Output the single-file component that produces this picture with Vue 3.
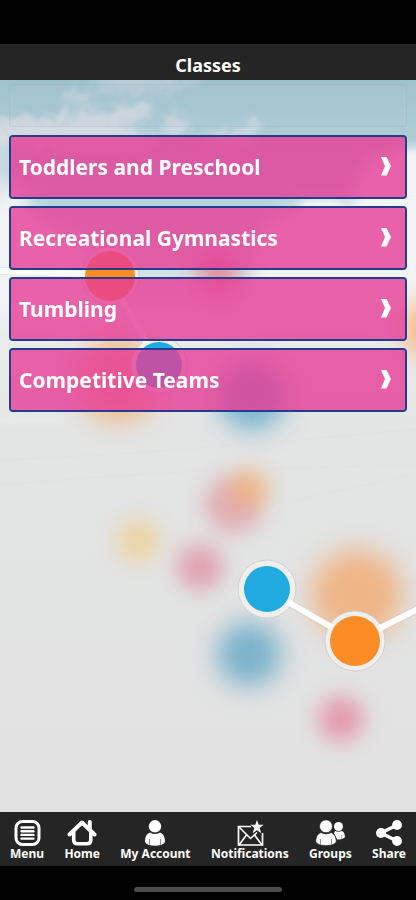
<script setup>
const classes = [
  'Toddlers and Preschool',
  'Recreational Gymnastics',
  'Tumbling',
  'Competitive Teams',
]

const tabs = [
  { id: 'menu', label: 'Menu' },
  { id: 'home', label: 'Home' },
  { id: 'account', label: 'My Account' },
  { id: 'notifications', label: 'Notifications' },
  { id: 'groups', label: 'Groups' },
  { id: 'share', label: 'Share' },
]
</script>

<template>
  <div class="app">
    <div class="status"></div>
    <header class="header"><h1 class="title">Classes</h1></header>

    <main class="main">
      <svg class="scene" viewBox="0 80 416 732" preserveAspectRatio="xMidYMin slice" aria-hidden="true">
        <defs>
          <linearGradient id="sky" x1="0" y1="80" x2="0" y2="812" gradientUnits="userSpaceOnUse">
            <stop offset="0" stop-color="#9fc3cc" />
            <stop offset="0.07" stop-color="#abccd4" />
            <stop offset="0.17" stop-color="#b8d5dd" />
            <stop offset="0.27" stop-color="#d6e3e8" />
            <stop offset="0.34" stop-color="#ececed" />
            <stop offset="0.48" stop-color="#e3e4e4" />
            <stop offset="1" stop-color="#e2e2e2" />
          </linearGradient>
          <filter id="b2" x="-50%" y="-50%" width="200%" height="200%"><feGaussianBlur stdDeviation="3" /></filter>
          <filter id="b6" x="-50%" y="-50%" width="200%" height="200%"><feGaussianBlur stdDeviation="8" /></filter>
          <filter id="b9" x="-50%" y="-50%" width="200%" height="200%" color-interpolation-filters="sRGB"><feGaussianBlur stdDeviation="10" /></filter>
          <filter id="b12" x="-60%" y="-60%" width="220%" height="220%" color-interpolation-filters="sRGB"><feGaussianBlur stdDeviation="13" /></filter>
          <filter id="cloud" x="-20%" y="-50%" width="140%" height="200%" color-interpolation-filters="sRGB">
            <feGaussianBlur in="SourceGraphic" stdDeviation="5" result="soft" />
            <feTurbulence type="fractalNoise" baseFrequency="0.07" numOctaves="3" seed="4" result="n" />
            <feDisplacementMap in="soft" in2="n" scale="24" xChannelSelector="R" yChannelSelector="G" />
            <feGaussianBlur stdDeviation="1" />
          </filter>
        </defs>
        <rect x="0" y="80" width="416" height="732" fill="url(#sky)" />

        <g filter="url(#cloud)" fill="#d3dae1">
          <ellipse cx="145" cy="84" rx="50" ry="9" opacity="0.5" />
          <ellipse cx="80" cy="99" rx="16" ry="8" opacity="0.65" />
          <ellipse cx="132" cy="114" rx="16" ry="10" />
          <ellipse cx="100" cy="121" rx="32" ry="10" />
          <ellipse cx="62" cy="128" rx="26" ry="12" />
          <ellipse cx="30" cy="125" rx="16" ry="10" />
          <ellipse cx="0" cy="130" rx="22" ry="10" />
          <ellipse cx="80" cy="140" rx="80" ry="12" />
          <ellipse cx="176" cy="126" rx="14" ry="12" opacity="0.85" />
          <ellipse cx="252" cy="128" rx="9" ry="10" opacity="0.7" />
          <ellipse cx="230" cy="138" rx="28" ry="8" opacity="0.7" />
        </g>
        <g filter="url(#b6)" fill="#f2f3f4">
          <path d="M-20 176 L22 186 L34 215 L75 235 L120 285 L120 320 L-20 320Z" />
          <path d="M250 285 L262 225 L310 202 L350 205 L366 160 L400 150 L440 150 L440 320 L250 320Z" />
        </g>
        <path d="M-20 130 H14 L6 200 H-20Z" fill="#d9e0e4" opacity="0.7" filter="url(#b6)" />
        <g filter="url(#b2)" fill="#f3f4f5">
          <ellipse cx="322" cy="206" rx="24" ry="6" />
          <path d="M358 212 L366 180 L400 152 L430 150 V230 H358Z" />
          <ellipse cx="28" cy="420" rx="42" ry="3" opacity="0.4" />
        </g>
        <g fill="none" stroke="#d9dcdd" stroke-width="1" opacity="0.2">
          <path d="M0 460 Q170 453 416 429" />
          <path d="M0 485 Q205 466 416 466" />
          <path d="M250 510 Q320 495 416 474" />
        </g>

        <g filter="url(#b12)">
          <circle cx="118" cy="379" r="42" fill="#f6ac70" opacity="0.8" />
          <circle cx="252" cy="395" r="34" fill="#5fa8c8" opacity="0.85" />
          <circle cx="218" cy="272" r="20" fill="#ee5968" opacity="0.75" />
          <circle cx="430" cy="328" r="28" fill="#ffa45b" opacity="0.75" />
          <circle cx="357" cy="595" r="45" fill="#f2ab72" opacity="0.82" />
          <circle cx="249" cy="654" r="32" fill="#67a9c7" opacity="0.85" />
        </g>
        <g filter="url(#b9)">
          <circle cx="234" cy="504" r="29" fill="#e08c98" opacity="0.62" />
          <circle cx="250" cy="488" r="20" fill="#f2b26e" opacity="0.62" />
          <circle cx="138" cy="541" r="22" fill="#f1ce88" opacity="0.65" />
          <circle cx="200" cy="567" r="23" fill="#dd8298" opacity="0.66" />
          <circle cx="341" cy="719" r="23" fill="#e47c96" opacity="0.68" />
        </g>

        <g stroke="#c9c9c9" stroke-width="8" opacity="0.35">
          <path d="M0 271 L90 274" />
          <path d="M289 603 L332 628" />
          <path d="M379 628 L420 608" />
        </g>
        <g fill="#f0efee" stroke="#d1cfce" stroke-width="1">
          <circle cx="110" cy="276" r="29" />
          <circle cx="159" cy="365" r="28" />
          <circle cx="267" cy="589" r="29" />
          <circle cx="355" cy="641" r="30" />
        </g>
        <g stroke="#fff" stroke-width="6">
          <path d="M0 271 L86 274" />
          <path d="M122 299 L147 343" />
          <path d="M288 602 L333 628" />
          <path d="M378 629 L420 608" />
        </g>
        <circle cx="110" cy="276" r="25" fill="#fb8c26" />
        <circle cx="159" cy="365" r="23" fill="#20abe1" />
        <circle cx="267" cy="589" r="23" fill="#20abe1" />
        <circle cx="355" cy="641" r="25" fill="#fb8c26" />
      </svg>

      <div class="content">
        <div class="panel"></div>
        <nav class="list" aria-label="Classes">
          <a v-for="name in classes" :key="name" class="item" href="#">
            <span>{{ name }}</span>
            <svg class="chevron" viewBox="0 0 10 20" aria-hidden="true">
              <path d="M0 0H5.500L10 9L5.500 18.500H0L4 9Z" fill="#fff" />
            </svg>
          </a>
        </nav>
      </div>
    </main>

    <nav class="tabs" aria-label="Main">
      <a v-for="tab in tabs" :key="tab.id" class="tab" href="#">
        <svg v-if="tab.id === 'menu'" class="icon" viewBox="0 0 30 26" aria-hidden="true">
          <rect x="4" y="1.500" width="23" height="23" rx="6.500" fill="none" stroke="#fff" stroke-width="3" />
          <path d="M9.500 7.500H21.500M9.500 11.200H21.500M9.500 14.900H21.500M9.500 18.600H21.500" stroke="#fff" stroke-width="2.400" stroke-linecap="round" />
        </svg>
        <svg v-else-if="tab.id === 'home'" class="icon" viewBox="0 0 30 26" aria-hidden="true">
          <path d="M2.500 14.500L15 2.500L27.500 14.500" fill="none" stroke="#fff" stroke-width="4" stroke-linecap="round" stroke-linejoin="round" />
          <path d="M22.800 2V9" stroke="#fff" stroke-width="4" stroke-linecap="round" />
          <path d="M6.700 12V20Q6.700 23.800 10.500 23.800H20Q23.800 23.800 23.800 20V12" fill="none" stroke="#fff" stroke-width="3.600" />
        </svg>
        <svg v-else-if="tab.id === 'account'" class="icon" viewBox="0 0 30 26" aria-hidden="true">
          <circle cx="15" cy="6.300" r="6.200" fill="#fff" />
          <path d="M10 12.500Q15 15.500 20 12.500C24 14 25 18 25 22Q24 24 21 25Q15 26.500 9 25Q6 24 5 22C5 18 6 14 10 12.500Z" fill="#fff" />
          <path d="M9.500 19V25M20.500 19V25" stroke="#777" stroke-width="0.800" />
        </svg>
        <svg v-else-if="tab.id === 'notifications'" class="icon" viewBox="0 0 30 26" aria-hidden="true">
          <path d="M16 6.500H3.500V25H27.500V13" fill="none" stroke="#fff" stroke-width="1.700" />
          <path d="M4 7L15.500 18.500L22 12.500M4 25L11.500 15M27 25L19.500 15" fill="none" stroke="#fff" stroke-width="1.600" />
          <path d="M22 0L23.700 4.800H28.500L24.700 8L26.300 13.200L22 10.200L17.700 13.200L19.300 8L15.500 4.800H20.300Z" fill="#fff" />
        </svg>
        <svg v-else-if="tab.id === 'groups'" class="icon" viewBox="0 0 30 26" aria-hidden="true">
          <circle cx="23.500" cy="6.500" r="4.500" fill="#fff" />
          <path d="M20 11Q23.500 12.500 27 11C29.500 12 30 15 29.800 17.500Q27 20 22 19.500L19 13Z" fill="#fff" />
          <path d="M26.700 15V19" stroke="#777" stroke-width="0.700" />
          <circle cx="11" cy="6.300" r="6.500" fill="#fff" stroke="#252525" stroke-width="0.800" />
          <path d="M6 12.500Q11 15.500 16 12.500C20 14 21.300 18 21.300 22Q20 24 17 25Q11 26.500 5 25Q2 24 0.700 22C0.700 18 2 14 6 12.500Z" fill="#fff" stroke="#252525" stroke-width="0.800" />
          <path d="M5.500 19V25M16.500 19V25" stroke="#777" stroke-width="0.800" />
        </svg>
        <svg v-else class="icon" viewBox="0 0 30 26" aria-hidden="true">
          <path d="M23 5L7 13L23 21" fill="none" stroke="#fff" stroke-width="3.600" />
          <circle cx="23" cy="5" r="4.900" fill="#fff" />
          <circle cx="7" cy="13" r="5" fill="#fff" />
          <circle cx="23" cy="21" r="4.900" fill="#fff" />
        </svg>
        <span>{{ tab.label }}</span>
      </a>
    </nav>
    <div class="gesture"><div class="bar"></div></div>
  </div>
</template>

<style>
body {
  background: #000;
}
</style>

<style scoped>
.app {
  display: flex;
  flex-direction: column;
  min-height: 100vh;
  background: #000;
  color: #fff;
  font-family: "Noto Sans", "Open Sans", sans-serif;
  font-weight: 700;
}
.status {
  height: 44px;
}
.header {
  display: flex;
  align-items: center;
  justify-content: center;
  height: 36px;
  padding-top: 6px;
  box-sizing: border-box;
  background: #252525;
}
.title {
  margin: 0;
  font-size: 18px;
  line-height: 28px;
}
.main {
  position: relative;
  flex: 1;
  overflow: hidden;
  background: #e2e2e2;
}
.scene {
  position: absolute;
  inset: 0;
  width: 100%;
  height: 100%;
}
.content {
  position: relative;
  padding: 4px 9px;
}
.panel {
  height: 43px;
  margin-bottom: 8px;
  box-sizing: border-box;
  border: 1px solid rgba(130, 160, 180, 0.16);
  border-radius: 3px;
  background: rgba(175, 190, 210, 0.14);
}
.list {
  display: flex;
  flex-direction: column;
  gap: 7px;
}
.item {
  display: flex;
  align-items: center;
  justify-content: space-between;
  height: 64px;
  padding: 0 14px 0 8px;
  box-sizing: border-box;
  border: 2px solid #253c8c;
  border-radius: 4px;
  background: rgba(230, 60, 150, 0.8);
  background-clip: padding-box;
  color: #fff;
  font-size: 21px;
  line-height: 28px;
  text-decoration: none;
}
.chevron {
  width: 10px;
  height: 20px;
}
.tabs {
  display: flex;
  justify-content: space-between;
  height: 54px;
  padding: 8px 10px 0;
  box-sizing: border-box;
  background: #252525;
}
.tab {
  display: flex;
  flex-direction: column;
  align-items: center;
  color: #fff;
  font-size: 12px;
  line-height: 16px;
  text-decoration: none;
}
.icon {
  width: 30px;
  height: 26px;
}
.gesture {
  display: flex;
  justify-content: center;
  height: 34px;
  padding-top: 21px;
  box-sizing: border-box;
}
.bar {
  width: 148px;
  height: 5px;
  border-radius: 3px;
  background: #4c4c4c;
}
</style>
